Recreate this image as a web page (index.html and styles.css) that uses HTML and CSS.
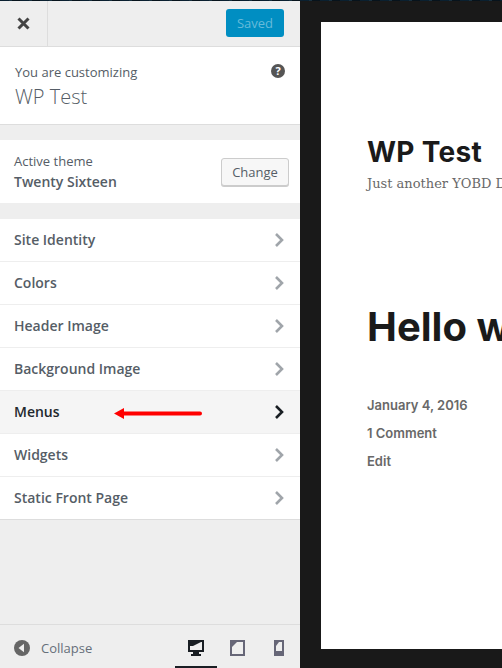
FILE: index.html
```html
<!DOCTYPE html>
<html lang="en">
<head>
    <meta charset="UTF-8">
    <title>Customize: WP Test</title>
    <link rel="stylesheet" href="styles.css">
</head>
<body>
    <div class="sidebar">
        <div class="topbar">
            <div class="close">
                <svg width="15" height="15" viewBox="0 0 15 15"><path d="M2.5 2.5l10 10M12.5 2.5l-10 10" stroke="#444" stroke-width="3" fill="none"/></svg>
            </div>
            <div class="saved">Saved</div>
        </div>
        <div class="info">
            <div>
                <div class="info-label">You are customizing</div>
                <div class="info-title">WP Test</div>
            </div>
            <svg class="help" width="14" height="14" viewBox="0 0 14 14"><circle cx="7" cy="7" r="7" fill="#555"/><text x="7" y="11" text-anchor="middle" class="help-mark">?</text></svg>
        </div>
        <div class="theme">
            <div>
                <div class="theme-label">Active theme</div>
                <div class="theme-name">Twenty Sixteen</div>
            </div>
            <div class="change">Change</div>
        </div>
        <ul class="menu">
            <li>Site Identity<svg class="chev" width="10" height="16" viewBox="0 0 10 16"><path d="M2 2l6 6-6 6" /></svg></li>
            <li>Colors<svg class="chev" width="10" height="16" viewBox="0 0 10 16"><path d="M2 2l6 6-6 6" /></svg></li>
            <li>Header Image<svg class="chev" width="10" height="16" viewBox="0 0 10 16"><path d="M2 2l6 6-6 6" /></svg></li>
            <li>Background Image<svg class="chev" width="10" height="16" viewBox="0 0 10 16"><path d="M2 2l6 6-6 6" /></svg></li>
            <li class="active">Menus
                <svg class="arrow" width="88" height="11" viewBox="0 0 88 11"><path d="M0 5.5L10 0v3.5h76a2 2 0 0 1 0 4H10V11z" fill="#f00"/></svg>
                <svg class="chev" width="10" height="16" viewBox="0 0 10 16"><path d="M2 2l6 6-6 6" /></svg></li>
            <li>Widgets<svg class="chev" width="10" height="16" viewBox="0 0 10 16"><path d="M2 2l6 6-6 6" /></svg></li>
            <li>Static Front Page<svg class="chev" width="10" height="16" viewBox="0 0 10 16"><path d="M2 2l6 6-6 6" /></svg></li>
        </ul>
        <div class="footer">
            <div class="collapse">
                <svg width="16" height="16" viewBox="0 0 16 16"><circle cx="8" cy="8" r="8" fill="#666"/><path d="M4.5 8l5.5-4.2v8.4z" fill="#eee"/></svg>
                <span>Collapse</span>
            </div>
            <div class="devices">
                <div class="device current">
                    <svg width="16" height="16" viewBox="0 0 16 16"><path d="M0 0h16v12h-5v2h2v2H3v-2h2v-2H0z" fill="#191e23"/><path d="M2 2h12v8H2z" fill="#eee"/><path d="M2 2h11L5 6H2z" fill="#191e23"/></svg>
                </div>
                <div class="device">
                    <svg width="15" height="16" viewBox="0 0 15 16"><path d="M0 0h15v16H0z" fill="#667"/><path d="M2 2h11v12H2z" fill="#eee"/><path d="M2 2h5L2 7z" fill="#667"/></svg>
                </div>
                <div class="device">
                    <svg width="10" height="16" viewBox="0 0 10 16"><path d="M0 0h10v16H0z" fill="#667"/><path d="M2 2h6v9H2z" fill="#eee"/><path d="M2 2h3L2 6z" fill="#667"/></svg>
                </div>
            </div>
        </div>
    </div>
    <div class="preview">
        <div class="page">
            <div class="site-title">WP Test</div>
            <div class="tagline">Just another YOBD Di</div>
            <div class="post-title">Hello world!</div>
            <div class="meta">January 4, 2016</div>
            <div class="meta">1 Comment</div>
            <div class="meta">Edit</div>
        </div>
    </div>
</body>
</html>
```

FILE: styles.css
```css
body {
    display: flex;
    height: 668px;
    margin: 0;
    overflow: hidden;
    background-color: #191919;
    font-family: "Open Sans", sans-serif;
    color: #555d66;
}
/* sliver of the desktop behind the window */
body::before {
    content: "";
    position: absolute;
    top: 0;
    left: 0;
    width: 502px;
    height: 1px;
    background: repeating-linear-gradient(90deg, #0a2030 0, #0a2030 9px, #17303f 9px, #17303f 12px, #07131c 12px, #07131c 20px);
}
.sidebar {
    display: flex;
    flex-direction: column;
    flex: none;
    width: 300px;
    height: 668px;
    box-sizing: border-box;
    background-color: #eeeeee;
}
.topbar {
    display: flex;
    justify-content: space-between;
    align-items: center;
    flex: none;
    height: 47px;
    box-sizing: border-box;
    padding-right: 16px;
    border-bottom: 1px solid #dddddd;
}
.close {
    display: flex;
    justify-content: center;
    align-items: center;
    width: 48px;
    height: 46px;
    box-sizing: border-box;
    border-right: 1px solid #dddddd;
}
.saved {
    width: 58px;
    height: 28px;
    line-height: 29px;
    text-align: center;
    font-size: 13px;
    border-radius: 3px;
    background-color: #008ec2;
    color: #66bbda;
}
.info {
    display: flex;
    justify-content: space-between;
    flex: none;
    height: 78px;
    box-sizing: border-box;
    padding: 15px 15px 0 15px;
    background-color: #ffffff;
    border-bottom: 1px solid #dddddd;
}
.info-label {
    font-size: 13px;
    line-height: 20px;
}
.info-title {
    font-size: 20px;
    font-weight: 300;
    line-height: 30px;
}
.help {
    margin-top: 2px;
}
.help-mark {
    font-size: 11px;
    font-weight: 700;
    fill: #ffffff;
}
.theme {
    display: flex;
    justify-content: space-between;
    align-items: center;
    flex: none;
    height: 63px;
    box-sizing: border-box;
    margin-top: 15px;
    padding: 0 11px 0 14px;
    background-color: #ffffff;
}
.theme-label {
    font-size: 13px;
    line-height: 20px;
}
.theme-name {
    font-size: 14px;
    font-weight: 600;
    line-height: 21px;
}
.change {
    width: 68px;
    height: 28px;
    box-sizing: border-box;
    line-height: 26px;
    text-align: center;
    font-size: 13px;
    border: 1px solid #cccccc;
    border-radius: 3px;
    box-shadow: 0 1px 0 #cccccc;
    background-color: #f7f7f7;
}
.menu {
    flex: none;
    margin: 16px 0 0 0;
    padding: 0;
    list-style: none;
    background-color: #ffffff;
    border-bottom: 1px solid #dddddd;
}
.menu li {
    position: relative;
    display: flex;
    justify-content: space-between;
    align-items: center;
    height: 43px;
    box-sizing: border-box;
    padding: 0 16px 2px 14px;
    font-size: 14px;
    font-weight: 600;
    border-top: 1px solid #eeeeee;
}
.menu li:first-child {
    border-top: none;
    height: 42px;
}
.menu li.active {
    background-color: #f5f5f5;
    color: #23282d;
}
.chev {
    margin-top: 2px;
    fill: none;
    stroke: #a0a5aa;
    stroke-width: 2.6;
}
.active .chev {
    stroke: #191e23;
}
.arrow {
    position: absolute;
    left: 114px;
    top: 17px;
}
.footer {
    display: flex;
    justify-content: space-between;
    align-items: center;
    flex: none;
    height: 44px;
    box-sizing: border-box;
    margin-top: auto;
    padding-left: 14px;
    border-top: 1px solid #dddddd;
}
.collapse {
    display: flex;
    align-items: center;
    gap: 11px;
    padding-top: 2px;
    font-size: 13px;
    color: #666f7a;
}
.devices {
    display: flex;
    width: 125px;
    height: 43px;
}
.device {
    display: flex;
    flex: 1;
    justify-content: center;
    box-sizing: border-box;
    padding-top: 15px;
}
.device.current {
    border-bottom: 2px solid #191e23;
}
.preview {
    flex: 1;
    min-width: 0;
    padding: 22px 0 19px 21px;
}
.page {
    height: 100%;
    box-sizing: border-box;
    padding: 114px 0 0 46px;
    background-color: #ffffff;
    overflow: hidden;
    white-space: nowrap;
    color: #1a1a1a;
    font-family: Inter, sans-serif;
}
.site-title {
    font-size: 28px;
    font-weight: 700;
    line-height: 32px;
    letter-spacing: 0.3px;
}
.tagline {
    margin-top: 6px;
    font-family: "DejaVu Serif", serif;
    font-size: 13px;
    line-height: 20px;
    color: #686868;
}
.post-title {
    margin-top: 109px;
    margin-bottom: 40px;
    font-size: 40px;
    font-weight: 700;
    line-height: 48px;
}
.meta {
    font-size: 13px;
    font-weight: 600;
    line-height: 28px;
    color: #686868;
}
```
